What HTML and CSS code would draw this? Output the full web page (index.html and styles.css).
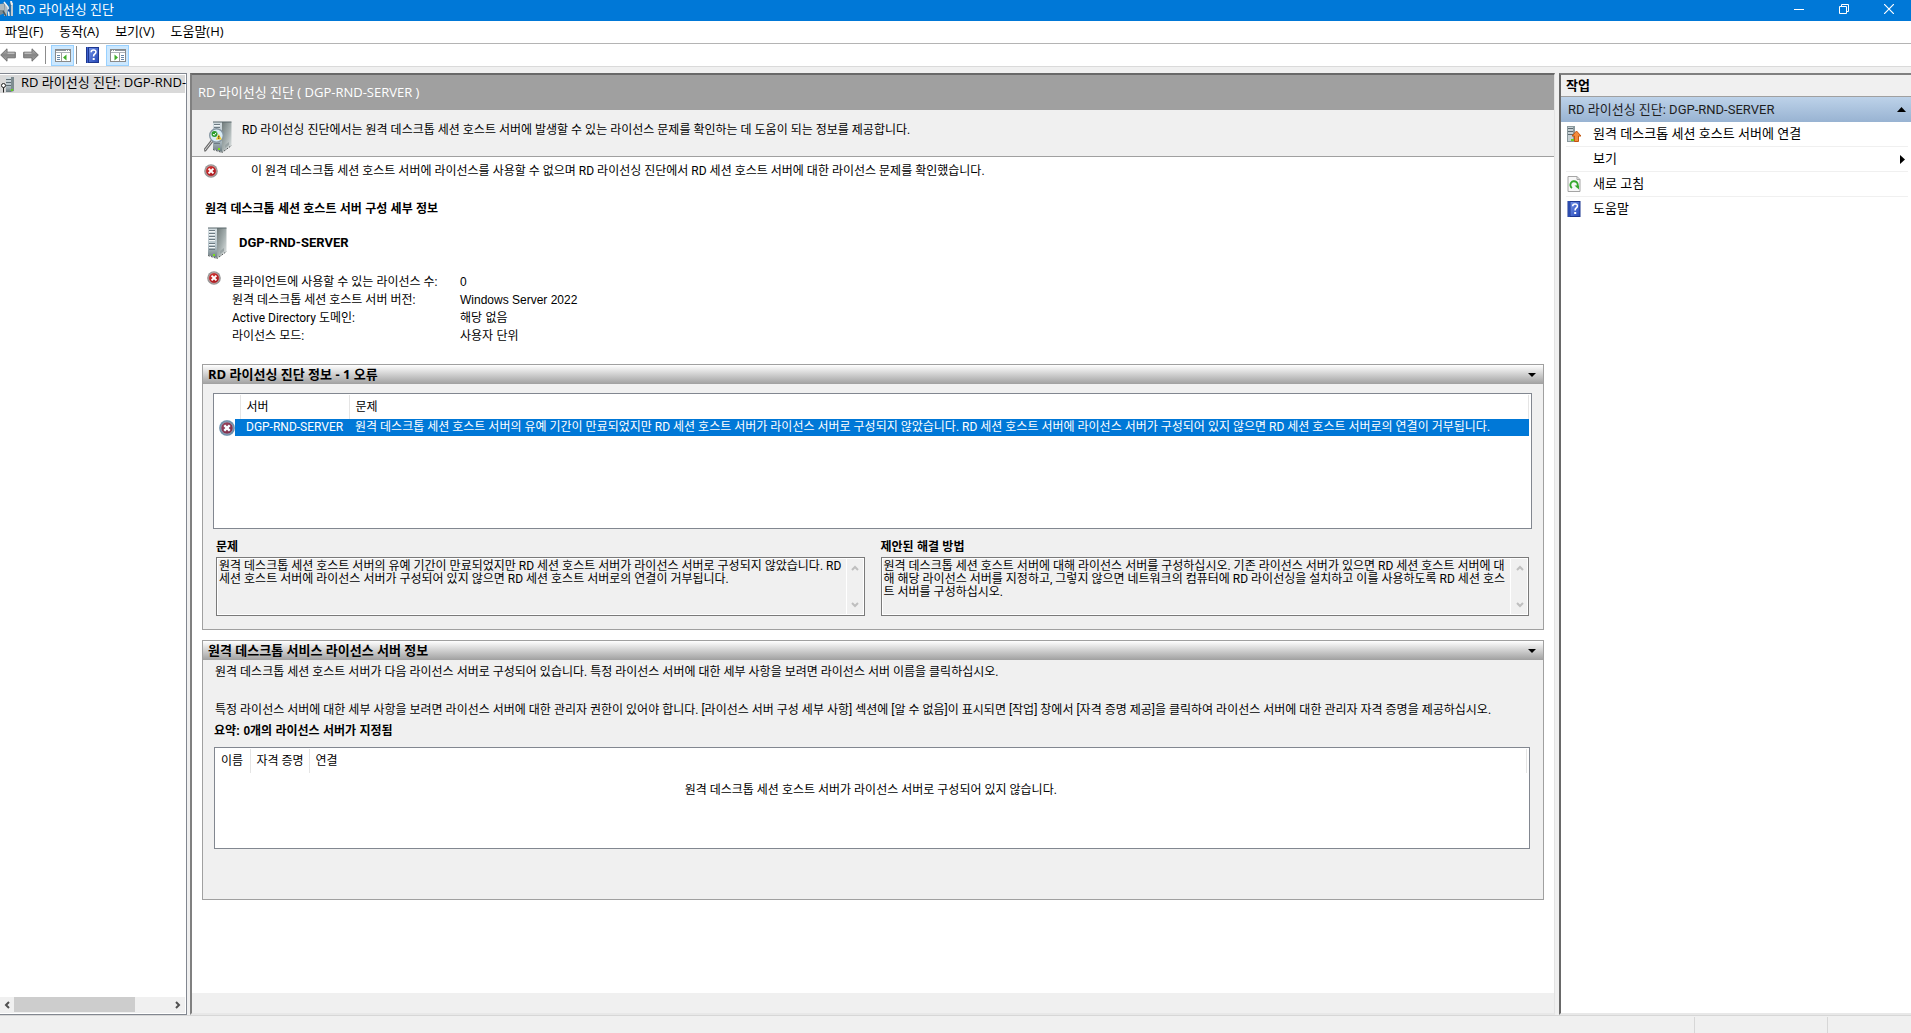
FILE: index.html
```html
<!DOCTYPE html>
<html lang="ko">
<head>
<meta charset="utf-8">
<title>RD 라이선싱 진단</title>
<link rel="stylesheet" href="styles.css">
</head>
<body>
<svg class="defs" aria-hidden="true">
  <defs>
    <linearGradient id="gSide" x1="0" y1="0" x2="1" y2="1"><stop offset="0" stop-color="#6f7a7a"/><stop offset=".5" stop-color="#a3adad"/><stop offset="1" stop-color="#e4e8e8"/></linearGradient>
    <linearGradient id="gFront" x1="0" y1="0" x2="0" y2="1"><stop offset="0" stop-color="#d5dee2"/><stop offset=".6" stop-color="#b4c2c9"/><stop offset="1" stop-color="#6c7b80"/></linearGradient>
    <linearGradient id="gArrow" x1="0" y1="0" x2="0" y2="1"><stop offset="0" stop-color="#b5b5b5"/><stop offset=".5" stop-color="#858585"/><stop offset="1" stop-color="#a8a8a8"/></linearGradient>
    <linearGradient id="gHelp" x1="0" y1="0" x2="1" y2="1"><stop offset="0" stop-color="#6f8fe6"/><stop offset="1" stop-color="#2749b8"/></linearGradient>
    <radialGradient id="gErr" cx=".4" cy=".35" r=".7"><stop offset="0" stop-color="#d83a36"/><stop offset="1" stop-color="#a3131b"/></radialGradient>
    <symbol id="server" viewBox="0 0 20 32">
      <path d="M1 1h9v30l-9-3z" fill="url(#gFront)"/>
      <path d="M10 1h9.500v23L10 31z" fill="url(#gSide)"/>
      <path d="M1 1h18.500" stroke="#59666a"/>
      <path d="M2 3.500h6M2 6.500h6M2 9.500h6M2 12.500h6M2 16.500h6M2 19.500h6M2 22.500h6" stroke="#6d7b83"/>
      <path d="M2 4.500h6M2 7.500h6M2 10.500h6M2 13.500h6M2 17.500h6M2 20.500h6" stroke="#f2f6f7"/>
      <path d="M13 24l4-3v3l-4 3z" fill="#9aa4a5"/>
      <rect x="6" y="27" width="2" height="2" fill="#7bdc1c"/>
      <path d="M1 28.500l9 3 9.500-7" fill="none" stroke="#4d5556" stroke-dasharray="2 1"/>
    </symbol>
    <symbol id="error" viewBox="0 0 14 14">
      <circle cx="7" cy="7" r="6.800" fill="#949494"/>
      <circle cx="7" cy="7" r="5.300" fill="url(#gErr)" stroke="#cdbcbc" stroke-width=".6"/>
      <path d="M4.600 4.600l4.800 4.800M9.400 4.600l-4.800 4.800" stroke="#fff" stroke-width="2"/>
    </symbol>
    <symbol id="help" viewBox="0 0 13 16">
      <rect width="13" height="16" fill="#1d378f"/>
      <rect x="3" y="1" width="9" height="14" fill="url(#gHelp)"/>
      <path d="M1.500 0v16" stroke="#3d62cf"/>
      <path d="M5.200 5.200q0-2.200 2.400-2.200t2.300 2q0 1.300-1.200 2T7.600 9.500" fill="none" stroke="#fff" stroke-width="1.600"/>
      <rect x="6.700" y="11" width="2" height="2" fill="#fff"/>
    </symbol>
    <symbol id="arrow" viewBox="0 0 16 14">
      <path d="M.7 7L7 .8v3.400h8.300v5.600H7v3.400z" fill="url(#gArrow)" stroke="#6e6e6e"/>
      <path d="M7.500 5.200h7" stroke="#cfcfcf"/>
    </symbol>
    <symbol id="panel" viewBox="0 0 16 13">
      <rect x=".5" y=".5" width="15" height="12" fill="#fff" stroke="#8a8a8a"/>
      <path d="M1 1.500h14" stroke="#8f969d"/><path d="M11 1.500h1M13 1.500h1" stroke="#fff"/>
      <path d="M1 3.500h14" stroke="#aeb4ba"/>
      <path d="M6.500 4v8" stroke="#9a9a9a"/>
      <path d="M2 6.500h3M2 8.500h3M2 10.500h3" stroke="#6787a8"/>
      <path d="M11.500 5.500v6L8 8.500z" fill="#3fae2a"/>
    </symbol>
  </defs>
</svg>

<div class="app">
  <header class="titlebar">
    <svg class="app-icon" width="14" height="16" viewBox="0 0 14 16" aria-hidden="true">
      <path d="M0 3l5-1v10l-5 2z" fill="#7d8c93"/><path d="M0 4h4M0 6h4M0 8h4" stroke="#dfe7ea"/>
      <path d="M5 2l3 4-1 9H4z" fill="#aebbc2"/><path d="M12 2v13" stroke="#c3ccd1" stroke-width="2"/>
      <path d="M10 3v12" stroke="#5b6a72"/>
      <path d="M4 1l4 5 1 9" fill="none" stroke="#f1f4f5" stroke-width="1.500"/><path d="M10 1l2 3M3 10l3 5" stroke="#4c5a61" stroke-width="1.500"/>
      <path d="M11 0l1 4" stroke="#eef2f4" stroke-width="2"/>
      <path d="M8 9l2 1" stroke="#1b4fa0" stroke-width="2"/>
    </svg>
    <h1>RD 라이선싱 진단</h1>
    <div class="window-buttons">
      <button type="button" aria-label="최소화"><svg width="10" height="10"><path d="M0 5.500h10" stroke="#fff"/></svg></button>
      <button type="button" aria-label="이전 크기로 복원"><svg width="10" height="10" fill="none" stroke="#fff"><path d="M.5 2.500h7v7h-7z"/><path d="M2.500 2.500v-2h7v7h-2"/></svg></button>
      <button type="button" aria-label="닫기"><svg width="10" height="10"><path d="M0 0l10 10M10 0L0 10" stroke="#fff" stroke-width="1.200"/></svg></button>
    </div>
  </header>

  <nav class="menubar">
    <button type="button">파일(F)</button>
    <button type="button">동작(A)</button>
    <button type="button">보기(V)</button>
    <button type="button">도움말(H)</button>
  </nav>

  <div class="toolbar" role="toolbar">
    <button type="button" aria-label="뒤로"><svg width="16" height="14"><use href="#arrow"/></svg></button>
    <button type="button" aria-label="앞으로"><svg class="flip" width="16" height="14"><use href="#arrow"/></svg></button>
    <span class="divider"></span>
    <button type="button" class="on" aria-label="콘솔 트리 표시/숨기기"><svg width="16" height="13"><use href="#panel"/></svg></button>
    <span class="divider"></span>
    <button type="button" class="help" aria-label="도움말"><svg width="13" height="16"><use href="#help"/></svg></button>
    <button type="button" class="on" aria-label="작업 창 표시/숨기기"><svg class="flip" width="16" height="13"><use href="#panel"/></svg></button>
  </div>

  <div class="panes">
    <aside class="tree">
      <div class="tree-item">
        <svg width="15" height="17" viewBox="0 0 15 17" aria-hidden="true">
          <path d="M6 1h5v15H6z" fill="url(#gFront)"/><path d="M11 1h3v14l-3 1z" fill="#7e8c90"/>
          <path d="M6 3.500h5M6 6.500h5M6 9.500h5" stroke="#5d6b72"/><path d="M11 14h2" stroke="#5fd01c" stroke-width="2"/>
          <circle cx="3.500" cy="9.500" r="2" fill="#fff" stroke="#222"/><path d="M3.500 11.500v5" stroke="#222"/>
        </svg>
        <span>RD 라이선싱 진단: DGP-RND-</span>
      </div>
      <div class="hscroll">
        <button type="button" aria-label="왼쪽으로 스크롤"><svg width="6" height="8"><path d="M5 1L2 4l3 3" fill="none" stroke="#505050" stroke-width="2"/></svg></button>
        <div class="track"><div class="thumb"></div></div>
        <button type="button" aria-label="오른쪽으로 스크롤"><svg width="6" height="8"><path d="M1 1l3 3-3 3" fill="none" stroke="#505050" stroke-width="2"/></svg></button>
      </div>
    </aside>

    <main class="content">
      <h2 class="content-title">RD 라이선싱 진단 ( DGP-RND-SERVER )</h2>
      <div class="intro">
        <svg width="28" height="32" viewBox="0 0 28 32" aria-hidden="true">
          <use href="#server" x="8" width="20" height="32"/>
          <path d="M8 20l-7 9" stroke="#6c6c6c" stroke-width="3" stroke-linecap="round"/><path d="M8 20l-7 9" stroke="#d8d8d8" stroke-linecap="round"/>
          <circle cx="12.500" cy="14.500" r="6.800" fill="#d7ebf5" stroke="#8797a3" stroke-width="1.400"/>
          <circle cx="10.500" cy="13" r="3" fill="#2c9c2b"/><path d="M9 13l1.200 1.300 2-2.600" fill="none" stroke="#fff"/>
          <path d="M14.800 13l3 5.500h-6z" fill="#f7cf2b"/><path d="M14.800 14.800v1.800M14.800 17.200v.8" stroke="#222"/>
        </svg>
        <p>RD 라이선싱 진단에서는 원격 데스크톱 세션 호스트 서버에 발생할 수 있는 라이선스 문제를 확인하는 데 도움이 되는 정보를 제공합니다.</p>
      </div>

      <div class="body">
        <div class="alert">
          <svg width="14" height="14" role="img" aria-label="오류"><use href="#error"/></svg>
          <p>이 원격 데스크톱 세션 호스트 서버에 라이선스를 사용할 수 없으며 RD 라이선싱 진단에서 RD 세션 호스트 서버에 대한 라이선스 문제를 확인했습니다.</p>
        </div>
        <h3 class="section-title">원격 데스크톱 세션 호스트 서버 구성 세부 정보</h3>
        <div class="server-name">
          <svg width="20" height="32" aria-hidden="true"><use href="#server"/></svg>
          <strong>DGP-RND-SERVER</strong>
        </div>
        <div class="details">
          <svg width="14" height="14" role="img" aria-label="오류"><use href="#error"/></svg>
          <dl>
            <dt>클라이언트에 사용할 수 있는 라이선스 수:</dt><dd>0</dd>
            <dt>원격 데스크톱 세션 호스트 서버 버전:</dt><dd>Windows Server 2022</dd>
            <dt>Active Directory 도메인:</dt><dd>해당 없음</dd>
            <dt>라이선스 모드:</dt><dd>사용자 단위</dd>
          </dl>
        </div>

        <section class="group">
          <h3><span>RD 라이선싱 진단 정보 - 1 오류</span>
            <button type="button" aria-label="접기"><svg width="8" height="4"><path d="M0 0h8L4 4z"/></svg></button></h3>
          <div class="group-body diag">
            <div class="list problems">
              <table>
                <colgroup><col class="c-icon"><col class="c-server"><col></colgroup>
                <thead><tr><th aria-label="상태"></th><th>서버</th><th>문제</th></tr></thead>
                <tbody><tr>
                  <td><svg width="16" height="16" role="img" aria-label="오류"><use href="#error"/><circle cx="8" cy="8" r="8" fill="#0078d7" fill-opacity=".25"/><path d="M5.500 5.500l5 5M10.500 5.500l-5 5" stroke="#fff" stroke-width="2"/></svg></td>
                  <td>DGP-RND-SERVER</td>
                  <td>원격 데스크톱 세션 호스트 서버의 유예 기간이 만료되었지만 RD 세션 호스트 서버가 라이선스 서버로 구성되지 않았습니다. RD 세션 호스트 서버에 라이선스 서버가 구성되어 있지 않으면 RD 세션 호스트 서버로의 연결이 거부됩니다.</td>
                </tr></tbody>
              </table>
            </div>
            <div class="fields">
              <div class="field">
                <label for="problem">문제</label>
                <div class="box">
                  <textarea id="problem" readonly>원격 데스크톱 세션 호스트 서버의 유예 기간이 만료되었지만 RD 세션 호스트 서버가 라이선스 서버로 구성되지 않았습니다. RD 세션 호스트 서버에 라이선스 서버가 구성되어 있지 않으면 RD 세션 호스트 서버로의 연결이 거부됩니다.</textarea>
                  <div class="vscroll">
                    <svg width="8" height="6"><path d="M1 5l3-3 3 3" fill="none" stroke="#bfbfbf" stroke-width="2"/></svg>
                    <svg width="8" height="6"><path d="M1 1l3 3 3-3" fill="none" stroke="#bfbfbf" stroke-width="2"/></svg>
                  </div>
                </div>
              </div>
              <div class="field">
                <label for="solution">제안된 해결 방법</label>
                <div class="box">
                  <textarea id="solution" readonly>원격 데스크톱 세션 호스트 서버에 대해 라이선스 서버를 구성하십시오. 기존 라이선스 서버가 있으면 RD 세션 호스트 서버에 대해 해당 라이선스 서버를 지정하고, 그렇지 않으면 네트워크의 컴퓨터에 RD 라이선싱을 설치하고 이를 사용하도록 RD 세션 호스트 서버를 구성하십시오.</textarea>
                  <div class="vscroll">
                    <svg width="8" height="6"><path d="M1 5l3-3 3 3" fill="none" stroke="#bfbfbf" stroke-width="2"/></svg>
                    <svg width="8" height="6"><path d="M1 1l3 3 3-3" fill="none" stroke="#bfbfbf" stroke-width="2"/></svg>
                  </div>
                </div>
              </div>
            </div>
          </div>
        </section>

        <section class="group">
          <h3><span>원격 데스크톱 서비스 라이선스 서버 정보</span>
            <button type="button" aria-label="접기"><svg width="8" height="4"><path d="M0 0h8L4 4z"/></svg></button></h3>
          <div class="group-body license">
            <p>원격 데스크톱 세션 호스트 서버가 다음 라이선스 서버로 구성되어 있습니다. 특정 라이선스 서버에 대한 세부 사항을 보려면 라이선스 서버 이름을 클릭하십시오.</p>
            <p>특정 라이선스 서버에 대한 세부 사항을 보려면 라이선스 서버에 대한 관리자 권한이 있어야 합니다. [라이선스 서버 구성 세부 사항] 섹션에 [알 수 없음]이 표시되면 [작업] 창에서 [자격 증명 제공]을 클릭하여 라이선스 서버에 대한 관리자 자격 증명을 제공하십시오.</p>
            <p class="summary">요약: 0개의 라이선스 서버가 지정됨</p>
            <div class="list servers">
              <table>
                <colgroup><col class="c-name"><col class="c-cred"><col></colgroup>
                <thead><tr><th>이름</th><th>자격 증명</th><th>연결</th></tr></thead>
                <tbody><tr><td colspan="3">원격 데스크톱 세션 호스트 서버가 라이선스 서버로 구성되어 있지 않습니다.</td></tr></tbody>
              </table>
            </div>
          </div>
        </section>
      </div>
      <div class="content-foot"></div>
    </main>

    <aside class="actions">
      <h2>작업</h2>
      <h3><span>RD 라이선싱 진단: DGP-RND-SERVER</span><svg width="9" height="5" aria-hidden="true"><path d="M0 5h9L4.500 0z"/></svg></h3>
      <ul>
        <li><button type="button">
          <svg width="14" height="16" viewBox="0 0 14 16" aria-hidden="true"><path d="M0 0h8v16H0z" fill="#8b999d"/><path d="M1 1h5v14H1z" fill="#c6d0d4"/><path d="M1 2.500h5M1 5.500h5M1 8.500h5" stroke="#5d6b72"/><path d="M4 14h3" stroke="#67cf22" stroke-width="2"/><path d="M9.500 5l4.500 5h-2.500v5.500h-4V10H5z" fill="#f58b3c" stroke="#c3560f"/></svg>
          <span>원격 데스크톱 세션 호스트 서버에 연결</span></button></li>
        <li><button type="button"><i></i><span>보기</span><svg class="more" width="5" height="9" aria-hidden="true"><path d="M0 0v9l5-4.500z"/></svg></button></li>
        <li><button type="button">
          <svg width="13" height="16" viewBox="0 0 13 16" aria-hidden="true"><path d="M.5.500h9l3 3v12H.5z" fill="#f7f7f7" stroke="#a5a5a5"/><path d="M9.500.500v3h3" fill="none" stroke="#a5a5a5"/><path d="M4.500 12a3.700 3.700 0 1 1 4.800-.6" fill="none" stroke="#36a82e" stroke-width="1.900"/><path d="M7 9.500h4.500v4z" fill="#36a82e"/></svg>
          <span>새로 고침</span></button></li>
        <li><button type="button"><svg width="13" height="16" aria-hidden="true"><use href="#help"/></svg><span>도움말</span></button></li>
      </ul>
    </aside>
  </div>

  <footer class="statusbar"><span></span><span></span><span></span></footer>
</div>
</body>
</html>
```
FILE: styles.css
```css
* { box-sizing: border-box; }

body {
  margin: 0;
  background: #f0f0f0;
  color: #000;
  font: 12px/16px Roboto, "Noto Sans CJK KR", sans-serif;
}

h1, h2, h3, p, dl, dd, ul { margin: 0; padding: 0; font-size: inherit; font-weight: normal; }
ul { list-style: none; }
svg { display: block; flex: none; }
button {
  display: flex;
  align-items: center;
  justify-content: center;
  margin: 0;
  padding: 0;
  border: 0;
  background: none;
  color: inherit;
  font: inherit;
}

.defs { position: absolute; width: 0; height: 0; }
.flip { transform: scaleX(-1); }

.app { display: flex; flex-direction: column; min-height: 100vh; }

.titlebar, .menubar, .tree-item, .content-title, .actions, .group > h3 {
  font-family: "Open Sans", "Noto Sans CJK KR", sans-serif;
  font-size: 13px;
}

/* Title bar */
.titlebar {
  display: flex;
  align-items: center;
  gap: 4px;
  height: 21px;
  padding-bottom: 4px;
  background: #0078d7;
  color: #fff;
}
.window-buttons { display: flex; margin-left: auto; }
.window-buttons button { width: 45px; height: 17px; }

/* Menu and toolbar */
.menubar {
  display: flex;
  gap: 16px;
  height: 23px;
  padding: 0 5px 2px;
  background: #fff;
  border-bottom: 1px solid #b4b4b4;
}
.toolbar {
  display: flex;
  align-items: center;
  height: 23px;
  background: #fff;
  border-bottom: 1px solid #dadada;
}
.toolbar button { width: 23px; height: 21px; }
.toolbar button:first-child { width: 16px; margin-right: 3px; }
.toolbar .on { background: #cce8ff; border: 1px solid #99d1ff; }
.toolbar .help { width: 27px; }
.divider { width: 1px; height: 18px; margin: 0 5px 0 3px; background: #8c8c8c; }
.on + .divider { margin: 0 2px; }

/* Three panes */
.panes {
  display: grid;
  grid-template-columns: 187px minmax(0, 1fr) 353px;
  gap: 3px;
  flex: 1;
  margin-top: 6px;
}
.tree {
  display: flex;
  flex-direction: column;
  justify-content: space-between;
  padding: 1px 1px 1px 0;
  border: solid #828790;
  border-width: 1px 1px 1px 0;
  background: #fff;
}
.tree-item {
  display: flex;
  align-items: center;
  gap: 6px;
  height: 18px;
  background: #d9d9d9;
  line-height: 14px;
  white-space: nowrap;
}
.tree-item span { height: 18px; }
.hscroll { display: flex; height: 16px; background: #f0f0f0; }
.hscroll button { width: 14px; }
.track { flex: 1; }
.thumb { width: 77%; height: 15px; background: #cdcdcd; }

.content {
  display: flex;
  flex-direction: column;
  border: solid;
  border-width: 2px 1px 2px 2px;
  border-color: #696969 #e3e3e3 #e8e8e8 #808080;
  background: #fff;
}
.content-title {
  height: 35px;
  padding-left: 6px;
  background: #a0a0a0;
  color: #fff;
  line-height: 34px;
}
.intro {
  display: flex;
  gap: 10px;
  height: 47px;
  padding: 11px 12px 0;
  background: #f0f0f0;
  border-bottom: 1px solid #a0a0a0;
}
.intro p { line-height: 18px; }
.body { flex: 1; padding: 6px 10px 0; }
.alert { display: flex; align-items: center; gap: 33px; padding-left: 2px; }
.section-title, .summary, .field label {
  font-family: "Liberation Sans", "Noto Sans CJK KR", sans-serif;
  font-weight: bold;
}
.section-title { margin-top: 22px; padding-left: 3px; }
.server-name { display: flex; align-items: center; gap: 12px; margin-top: 10px; padding-left: 5px; }
.server-name strong { font-size: 13px; }
.details { display: flex; gap: 11px; margin-top: 12px; padding-left: 5px; }
.details dl {
  display: grid;
  grid-template-columns: 228px 1fr;
  line-height: 18px;
  margin-top: 2px;
}
.details dd { font-family: "Liberation Sans", "Noto Sans CJK KR", sans-serif; }
.content-foot { height: 20px; background: #f0f0f0; }

/* Collapsible groups */
.group { margin-top: 10px; border: 1px solid #a0a0a0; background: #f0f0f0; }
.details + .group { margin-top: 19px; }
.group > h3 {
  display: flex;
  justify-content: space-between;
  height: 19px;
  padding: 0 7px 0 5px;
  background: linear-gradient(#fff, #a0a0a0);
  font-weight: bold;
  line-height: 18px;
}
.diag { padding: 9px 11px 13px 10px; }
.license { padding: 4px 13px 50px 11px; }
.license p { padding-left: 1px; }
.license p + p { margin-top: 22px; }
.license p.summary { margin-top: 5px; padding: 0; }

/* List views */
.list { border: 1px solid #828790; background: #fff; }
.problems { height: 136px; padding: 1px 2px 0 0; }
.servers { height: 102px; margin-top: 8px; padding: 1px 2px 0 0; }
table { width: 100%; border-collapse: collapse; table-layout: fixed; }
th {
  height: 24px;
  padding: 0 0 0 6px;
  border-right: 1px solid #e5e5e5;
  font-weight: normal;
  text-align: left;
}
td { height: 17px; padding: 0 0 0 6px; line-height: 17px; white-space: nowrap; overflow: hidden; }
.problems td { background: #0078d7; color: #fff; }
.problems td:first-child {
  padding: 0 0 0 5px;
  background: linear-gradient(to right, #fff 21px, #0078d7 21px);
}
.c-icon { width: 26px; }
.c-server { width: 109px; }
.c-name { width: 35px; }
.c-cred { width: 59px; }
.servers td { height: 34px; padding: 0; text-align: center; }

/* Read-only text boxes */
.fields { display: grid; grid-template-columns: 1fr 1fr; gap: 16px; margin-top: 10px; padding: 0 3px; }
.field label { display: block; height: 18px; }
.box { display: flex; height: 59px; border: 1px solid #7a7a7a; outline: 1px solid #fff; outline-offset: -2px; }
textarea {
  flex: 1;
  min-width: 0;
  margin: 0;
  padding: 2px;
  border: 0;
  outline: 0;
  background: none;
  color: inherit;
  font: 12px/13px Roboto, "Noto Sans CJK KR", sans-serif;
  overflow: hidden;
  resize: none;
}
.vscroll {
  display: flex;
  flex-direction: column;
  justify-content: space-between;
  align-items: center;
  width: 18px;
  padding: 7px 0;
  border-left: 1px solid #fff;
}

/* Actions pane */
.actions {
  margin-left: 1px;
  border: solid;
  border-width: 2px 0 2px 2px;
  border-color: #808080 #e3e3e3 #e8e8e8 #696969;
  background: #fff;
}
.actions h2 {
  height: 22px;
  padding-left: 5px;
  border: solid #a0a0a0;
  border-width: 0 0 1px;
  background: #f0f0f0;
  font-weight: 600;
  line-height: 20px;
}
.actions h3 {
  display: flex;
  align-items: center;
  justify-content: space-between;
  height: 25px;
  padding: 0 5px 0 7px;
  background: linear-gradient(#bdd2e9, #98b3d2);
  color: #1e1e1e;
  font-family: Roboto, "Noto Sans CJK KR", sans-serif;
}
.actions ul { padding: 0 3px 0 5px; }
.actions li { height: 25px; border-bottom: 1px solid #f0f0f0; }
.actions li:last-child { border: 0; }
.actions button { width: 100%; height: 24px; justify-content: flex-start; padding-left: 1px; }
.actions button > :first-child { width: 14px; margin-right: 12px; }
.actions button span { height: 18px; }
.actions .more { margin: 0 3px 0 auto; }

.statusbar { display: flex; justify-content: flex-end; height: 18px; border-top: 1px solid #d7d7d7; }
.statusbar span { width: 133px; margin-top: 1px; border-left: 1px solid #d7d7d7; }
.statusbar span:first-child { flex: 1; border: 0; }
.statusbar span:last-child { width: 84px; }
```
